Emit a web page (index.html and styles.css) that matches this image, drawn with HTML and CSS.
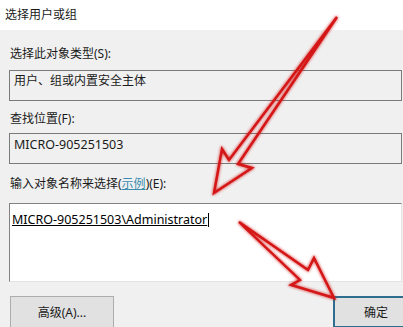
FILE: index.html
```html
<!DOCTYPE html>
<html lang="zh-CN">
  <head>
    <meta charset="UTF-8" />
    <meta name="viewport" content="width=device-width, initial-scale=1.0" />
    <link rel="stylesheet" href="styles.css">
    <title>选择用户或组</title>
  </head>
  <body>

    <div class="title-bar">选择用户或组</div>

    <section class="dialog">
      <p class="label label-first">选择此对象类型(S):</p>
      <div class="field field-readonly">用户、组或内置安全主体</div>

      <p class="label">查找位置(F):</p>
      <div class="field field-readonly field-latin">MICRO-905251503</div>

      <p class="label label-last">输入对象名称来选择(<a class="link">示例</a>)(E):</p>
      <div class="field field-input"><span class="typed">MICRO-905251503\Administrator</span><span class="caret"></span></div>

      <div class="buttons">
        <button class="btn">高级(A)...</button>
        <button class="btn btn-default">确定</button>
      </div>
    </section>

    <!-- red arrows drawn on top of the screenshot -->
    <svg class="arrows" width="403" height="327" viewBox="0 0 403 327">
      <defs>
        <filter id="glow" x="-20%" y="-20%" width="140%" height="140%">
          <feGaussianBlur in="SourceGraphic" stdDeviation="1.6" result="blur" />
          <feMerge>
            <feMergeNode in="blur" />
            <feMergeNode in="SourceGraphic" />
          </feMerge>
        </filter>
      </defs>
      <g class="arrow" filter="url(#glow)">
        <polygon points="337,17 238,164 252,168 214,193 222,149 229,160" />
        <polygon points="239,222 308,270 314,258 334,298 291,285 300,280" />
      </g>
    </svg>

  </body>
</html>
```

FILE: styles.css
```css
body {
  margin: 0;
  width: 403px;
  height: 327px;
  overflow: hidden;
  position: relative;
  background-color: #f0f0f0;
  font-family: "Noto Sans", "Noto Sans CJK SC", sans-serif;
  font-size: 12px;
  color: #1a1a1a;
}

.title-bar {
  height: 30px;
  line-height: 30px;
  padding-left: 5px;
  background-color: #ffffff;
}

.dialog {
  padding: 0 1px 0 9px;
}

.label {
  margin: 10px 0 0 1px;
  line-height: 16px;
}

.label-first {
  margin-top: 16px;
}

.label-last {
  margin-top: 12px;
}

.link {
  color: #3a8caf;
  text-decoration: underline;
}

.field {
  margin-top: 6px;
  border: 1px solid #7a7a7a;
  line-height: 16px;
}

.field-readonly {
  height: 27px;
  padding: 2px 4px 0;
}

.label-first + .field {
  margin-top: 8px;
}

.field-latin {
  padding-top: 3px;
  height: 26px;
  font-size: 12.5px;
}

.field-input {
  margin-top: 11px;
  height: 69px;
  padding: 8px 2px 0;
  background-color: #ffffff;
  border-color: #828282 #e3e3e3 #e3e3e3 #828282;
  font-size: 12.5px;
  color: #000000;
}

.typed {
  text-decoration: underline;
}

.caret {
  display: inline-block;
  width: 1px;
  height: 14px;
  margin-left: 1px;
  vertical-align: -3px;
  background-color: #000000;
}

.buttons {
  display: flex;
  justify-content: space-between;
  margin-top: 14px;
}

.btn {
  width: 104px;
  height: 32px;
  margin-left: 1px;
  padding: 0;
  border: 1px solid #adadad;
  background-color: #e1e1e1;
  font-family: inherit;
  font-size: 12px;
  color: #1a1a1a;
}

.btn-default {
  width: 86px;
  margin-right: -17px;
  border: 2px solid #2f6d8e;
}

.arrows {
  position: absolute;
  left: 0;
  top: 0;
}

.arrow {
  fill: none;
  stroke: #d41313;
  stroke-width: 2.4;
  stroke-linejoin: miter;
}
```
